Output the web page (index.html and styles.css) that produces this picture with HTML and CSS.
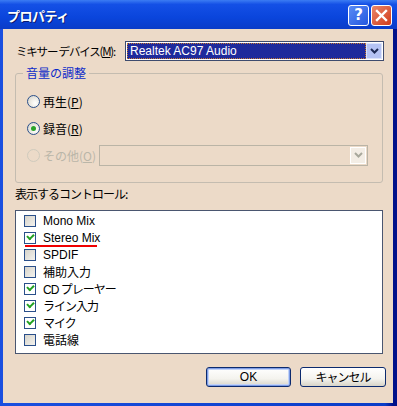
FILE: index.html
```html
<!DOCTYPE html>
<html lang="ja">
<head>
<meta charset="UTF-8">
<title>プロパティ</title>
<link rel="stylesheet" href="styles.css">
</head>
<body>

<div class="window">
  <div class="titlebar">
    <div class="title">プロパティ</div>
    <div class="title-buttons">
      <div class="tb-btn tb-help">?</div>
      <div class="tb-btn tb-close">
        <svg width="13" height="13" viewBox="0 0 13 13">
          <path d="M2 2 L11 11 M11 2 L2 11" stroke="#fff" stroke-width="2.4" stroke-linecap="square"/>
        </svg>
      </div>
    </div>
  </div>

  <div class="client">
    <!-- ミキサー デバイス -->
    <div class="device-row">
      <div class="label jp">ミキサー&nbsp;デバイス(<u>M</u>):</div>
      <div class="combo">
        <div class="combo-value selected">Realtek AC97 Audio</div>
        <div class="combo-arrow">
          <svg width="9" height="6" viewBox="0 0 9 6"><path d="M1 1 L4.5 4.5 L8 1" fill="none" stroke="#1d2a55" stroke-width="2"/></svg>
        </div>
      </div>
    </div>

    <div class="groupbox">
      <div class="legend">音量の調整</div>
      <div class="radio-row">
        <span class="radio"></span>
        <span class="radio-text">再生(<u>P</u>)</span>
      </div>
      <div class="radio-row">
        <span class="radio checked"></span>
        <span class="radio-text">録音(<u>R</u>)</span>
      </div>
      <div class="radio-row disabled">
        <span class="radio"></span>
        <span class="radio-text">その他(<u>O</u>)</span>
        <div class="combo combo-disabled">
          <div class="combo-value"></div>
          <div class="combo-arrow">
            <svg width="9" height="6" viewBox="0 0 9 6"><path d="M1 1 L4.5 4.5 L8 1" fill="none" stroke="#a8a89c" stroke-width="2"/></svg>
          </div>
        </div>
      </div>
    </div>

    <div class="list-label jp">表示するコントロール:</div>

    <div class="listbox">
      <div class="item"><span class="check"></span><span>Mono Mix</span></div>
      <div class="item"><span class="check on"></span><span>Stereo Mix</span><span class="mark"></span></div>
      <div class="item"><span class="check"></span><span>SPDIF</span></div>
      <div class="item"><span class="check"></span><span>補助入力</span></div>
      <div class="item"><span class="check on"></span><span class="jp">CD プレーヤー</span></div>
      <div class="item"><span class="check on"></span><span class="jp">ライン入力</span></div>
      <div class="item"><span class="check on"></span><span class="jp">マイク</span></div>
      <div class="item"><span class="check"></span><span>電話線</span></div>
    </div>

    <div class="buttons">
      <button type="button" class="btn btn-default">OK</button>
      <button type="button" class="btn jp">キャンセル</button>
    </div>
  </div>
</div>

</body>
</html>
```

FILE: styles.css
```css
body {
  margin: 0;
  font-family: 'Noto Sans CJK JP', 'DejaVu Sans', sans-serif;
  font-size: 12px;
  color: #000;
}

.window {
  width: 397px;
  height: 406px;
  background: linear-gradient(90deg, #1a4fe0 0, #0a3cc8 97%, #00108a 99%);
  display: flex;
  flex-direction: column;
}

.titlebar {
  height: 29px;
  display: flex;
  justify-content: space-between;
  align-items: center;
  padding: 0 5px 0 7px;
  background: linear-gradient(180deg, #3b7cf3 0, #1450e6 15%, #0a45dc 60%, #0a3cc8 100%);
  box-sizing: border-box;
}

.title {
  color: #fff;
  font-weight: bold;
  font-size: 13px;
  letter-spacing: -0.5px;
  text-shadow: 1px 1px 0 #0a1a70;
  padding-top: 1px;
}

.title-buttons {
  display: flex;
  gap: 2px;
  margin-top: 1px;
}

.tb-btn {
  width: 21px;
  height: 21px;
  box-sizing: border-box;
  border: 1px solid #fff;
  border-radius: 3px;
  display: flex;
  align-items: center;
  justify-content: center;
  color: #fff;
  font-family: 'DejaVu Sans', sans-serif;
  font-weight: bold;
  font-size: 15px;
}

.tb-help {
  background: linear-gradient(135deg, #5a8cf5, #2457e0);
}

.tb-close {
  background: linear-gradient(135deg, #e9876b, #d23b1a);
}

.client {
  flex: 1;
  margin: 0 4px 3px 3px;
  background: #ecdac8;
  display: flex;
  flex-direction: column;
  padding: 12px 0 0 12px;
}

.jp {
  letter-spacing: -1px;
}

u {
  text-decoration: underline;
}

.device-row {
  display: flex;
  align-items: center;
  height: 20px;
}

.device-row .label {
  width: 109px;
  padding-left: 1px;
  font-size: 11.5px;
  letter-spacing: -1.2px;
  white-space: nowrap;
}

.combo {
  display: flex;
  box-sizing: border-box;
  height: 20px;
  border: 1px solid #3e4b6e;
  background: #fff;
  padding: 1px;
}

.device-row .combo {
  width: 259px;
}

.combo-value {
  flex: 1;
  line-height: 16px;
  padding-left: 3px;
  font-family: 'Liberation Sans', sans-serif;
  font-size: 12px;
}

.combo-value.selected {
  background: #1f2a9c;
  color: #fff;
  outline: 1px dotted #c87830;
  outline-offset: -1px;
}

.combo-arrow {
  width: 16px;
  display: flex;
  align-items: center;
  justify-content: center;
  background: #b5c3f4;
  border: 1px solid #dbe3fb;
  box-sizing: border-box;
}

.groupbox {
  margin-top: 12px;
  width: 368px;
  height: 110px;
  box-sizing: border-box;
  border: 1px solid #c4bcb0;
  border-radius: 3px;
  padding: 13px 0 0 11px;
}

.legend {
  margin: -22px 0 0 -4px;
  padding: 0 3px;
  width: max-content;
  background: #ecdac8;
  color: #0c2bc8;
  line-height: 16px;
  margin-bottom: 10px;
}

.radio-row {
  display: flex;
  align-items: center;
  height: 20px;
  margin-bottom: 7px;
}

.radio {
  width: 13px;
  height: 13px;
  box-sizing: border-box;
  border-radius: 50%;
  border: 1px solid #2a4f8a;
  background: radial-gradient(circle at 65% 65%, #fff 0, #f0eee8 40%, #cfcdc4 100%);
  margin-right: 3px;
  display: flex;
  align-items: center;
  justify-content: center;
}

.radio.checked::after {
  content: "";
  width: 5px;
  height: 5px;
  border-radius: 50%;
  background: #2aa32a;
}

.radio-row.disabled {
  color: #bab6a8;
  margin-top: 1px;
}

.radio-row.disabled .radio {
  border-color: #cfcabd;
  background: transparent;
}

.combo-disabled {
  margin-left: auto;
  margin-right: 14px;
  width: 269px;
  height: 21px;
  border-color: #bab4a6;
  background: transparent;
}

.combo-disabled .combo-arrow {
  background: #f3ede5;
  border-color: #fff;
}

.list-label {
  margin-top: 3px;
  padding-left: 0;
  line-height: 16px;
}

.listbox {
  margin-top: 8px;
  width: 368px;
  height: 144px;
  box-sizing: border-box;
  background: #fff;
  border: 1px solid #4a5670;
  padding: 1px 0 0 8px;
}

.item {
  position: relative;
  display: flex;
  align-items: center;
  height: 17px;
  font-family: 'Liberation Sans', 'Noto Sans CJK JP', sans-serif;
}

.check {
  width: 12px;
  height: 12px;
  box-sizing: border-box;
  border: 1px solid #2a4f8a;
  background: linear-gradient(135deg, #d6d3ca, #f3f2ee);
  margin-right: 7px;
  display: flex;
  align-items: center;
  justify-content: center;
}

.check.on {
  background: #fff;
}

.check.on::after {
  content: "";
  width: 5px;
  height: 3px;
  border-left: 2px solid #21a121;
  border-bottom: 2px solid #21a121;
  transform: rotate(-45deg) translate(1px, -1px);
}

.mark {
  position: absolute;
  left: 1px;
  top: 16px;
  width: 72px;
  height: 2px;
  background: #f00000;
}

.buttons {
  display: flex;
  justify-content: flex-end;
  gap: 9px;
  margin-top: 13px;
  padding-right: 7px;
}

.btn {
  height: 20px;
  width: 86px;
  border: 1px solid #0c2a6e;
  border-radius: 3px;
  background: linear-gradient(180deg, #fff 0, #f4f3ee 60%, #d8d4c8 100%);
  font-family: 'Noto Sans CJK JP', sans-serif;
  font-size: 12px;
  padding: 0;
  line-height: 16px;
  color: #000;
}

.btn-default {
  width: 85px;
  box-shadow: inset 0 0 0 1px #7e9de6, inset 0 0 0 2px #c3d3f7;
  font-family: 'Liberation Sans', sans-serif;
}
```
